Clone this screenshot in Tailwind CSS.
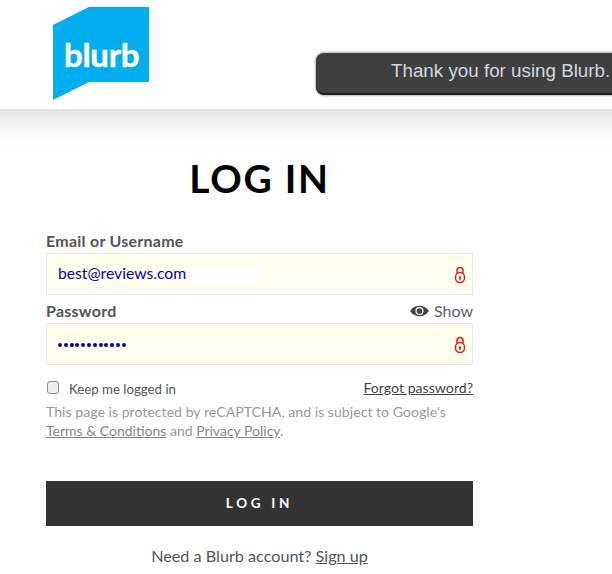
<!DOCTYPE html>
<html lang="en">
<head>
    <meta charset="UTF-8">
    <title>Log in - Blurb</title>
    <script src="https://cdn.jsdelivr.net/npm/@tailwindcss/browser@4"></script>
</head>
<body class="bg-white font-['Lato','Liberation_Sans',sans-serif] text-[#555] overflow-hidden">
    <div class="w-[612px] h-[574px] overflow-hidden">
        <!-- header -->
        <header class="relative h-[109px] bg-white pl-[53px] pt-[7px]">
            <svg width="96" height="93" viewBox="0 0 96 93" class="block">
                <polygon points="0,18 36,0 96,0 96,75 36,75 0,93" fill="#00aeef"/>
                <text x="11" y="60" font-family="Lato, sans-serif" font-weight="700" font-size="33" letter-spacing="-0.3" stroke="#fff" stroke-width="0.5" fill="#fff">blurb</text>
            </svg>
            <div class="absolute left-[316px] top-[53px] w-[320px] h-[42px] rounded-[8px] bg-[#3f3f3f] border-b-2 border-[#1c1c1c] shadow-[0_0_3px_rgba(0,0,0,0.6)] pl-[75px] pt-[6px] font-['Liberation_Sans',sans-serif] text-[18.8px] leading-[24px] text-[#d3d6e0]">Thank you for using Blurb.</div>
        </header>
        <div class="h-[465px] bg-[linear-gradient(#e2e2e2,#f6f6f6_18px,#fff_40px)]">
            <div class="w-[427px] ml-[46px] pt-[46px]">
                <h1 class="text-center font-bold text-[39px] leading-[46px] tracking-[1.7px] text-black">LOG IN</h1>

                <form class="mt-[30px]">
                    <label class="block font-bold text-[16px] tracking-[0.25px] leading-[20px] h-[20px]">Email or Username</label>
                    <div class="relative h-[42px] mt-[2px] bg-[#ffffed] border border-[#e8e8e8] pl-[11px] flex items-center text-[15.7px] text-[#0000c0]">
                        <span>best@reviews.com</span>
                        <div class="absolute left-[140px] top-[12px] w-[75px] h-[16px] bg-white"></div>
                        <svg width="12" height="18" viewBox="0 0 12 18" class="absolute right-[6px] top-[12px]" fill="none" stroke="#dd1c24" stroke-width="1.5">
                            <path d="M3 7V4.5a3 3 0 0 1 6 0V7"/>
                            <rect x="1.5" y="6.5" width="9" height="10" rx="4.5"/>
                            <circle cx="6" cy="11.5" r="1.2" fill="#dd1c24" stroke="none"/>
                            <path d="M6 11.5v2.5" stroke-width="1.2"/>
                        </svg>
                    </div>

                    <div class="flex justify-between items-center h-[20px] mt-[6px] mb-[2px]">
                        <label class="font-bold text-[16px] tracking-[0.25px] leading-[20px]">Password</label>
                        <span class="flex items-center gap-[5px] text-[16px] leading-[20px] text-[#5a5f68]">
                            <svg width="19" height="12" viewBox="0 0 20 12">
                                <path d="M0 6C3 2 6 .5 10 .5S17 2 20 6c-3 4-6 5.500-10 5.500S3 10 0 6z" fill="#444"/>
                                <circle cx="10" cy="6" r="4.300" fill="#fff"/>
                                <circle cx="10" cy="6" r="3" fill="#444"/>
                            </svg>
                            Show
                        </span>
                    </div>
                    <div class="relative h-[42px] bg-[#ffffed] border border-[#e8e8e8] pl-[11px] flex items-center text-[#0000c0]">
                        <span class="flex gap-[1.8px] pt-[2px]">
                            <i class="w-[4px] h-[4px] rounded-full bg-[#0000c0]"></i><i class="w-[4px] h-[4px] rounded-full bg-[#0000c0]"></i><i class="w-[4px] h-[4px] rounded-full bg-[#0000c0]"></i><i class="w-[4px] h-[4px] rounded-full bg-[#0000c0]"></i><i class="w-[4px] h-[4px] rounded-full bg-[#0000c0]"></i><i class="w-[4px] h-[4px] rounded-full bg-[#0000c0]"></i><i class="w-[4px] h-[4px] rounded-full bg-[#0000c0]"></i><i class="w-[4px] h-[4px] rounded-full bg-[#0000c0]"></i><i class="w-[4px] h-[4px] rounded-full bg-[#0000c0]"></i><i class="w-[4px] h-[4px] rounded-full bg-[#0000c0]"></i><i class="w-[4px] h-[4px] rounded-full bg-[#0000c0]"></i><i class="w-[4px] h-[4px] rounded-full bg-[#0000c0]"></i>
                        </span>
                        <svg width="12" height="18" viewBox="0 0 12 18" class="absolute right-[6px] top-[12px]" fill="none" stroke="#dd1c24" stroke-width="1.5">
                            <path d="M3 7V4.5a3 3 0 0 1 6 0V7"/>
                            <rect x="1.5" y="6.500" width="9" height="10" rx="4.500"/>
                            <circle cx="6" cy="11.500" r="1.200" fill="#dd1c24" stroke="none"/>
                            <path d="M6 11.500v2.500" stroke-width="1.200"/>
                        </svg>
                    </div>

                    <div class="flex justify-between items-start mt-[14px] h-[18px]">
                        <div class="flex items-start">
                            <div class="w-[12px] h-[13px] ml-[1px] mt-[2px] rounded-[3px] bg-[#eee] border border-[#8a8a8a]"></div>
                            <span class="ml-[10px] mt-[1px] text-[13.25px] leading-[18px]">Keep me logged in</span>
                        </div>
                        <a class="underline text-[14.15px] leading-[18px] text-[#444]">Forgot password?</a>
                    </div>

                    <p class="mt-[5px] text-[14.15px] leading-[19px] text-[#999]">This page is protected by reCAPTCHA, and is subject to Google's<br><span class="text-[14px]"><a class="underline text-[#888]">Terms &amp; Conditions</a> and <a class="underline text-[#888]">Privacy Policy</a>.</span></p>

                    <button type="button" class="block w-full h-[45px] mt-[41px] bg-[#333] text-white font-bold text-[13.5px] tracking-[3.7px]">LOG IN</button>

                    <p class="mt-[20px] text-center text-[16.2px] leading-[20px]">Need a Blurb account? <a class="underline">Sign up</a></p>
                </form>
            </div>
        </div>
    </div>
</body>
</html>
